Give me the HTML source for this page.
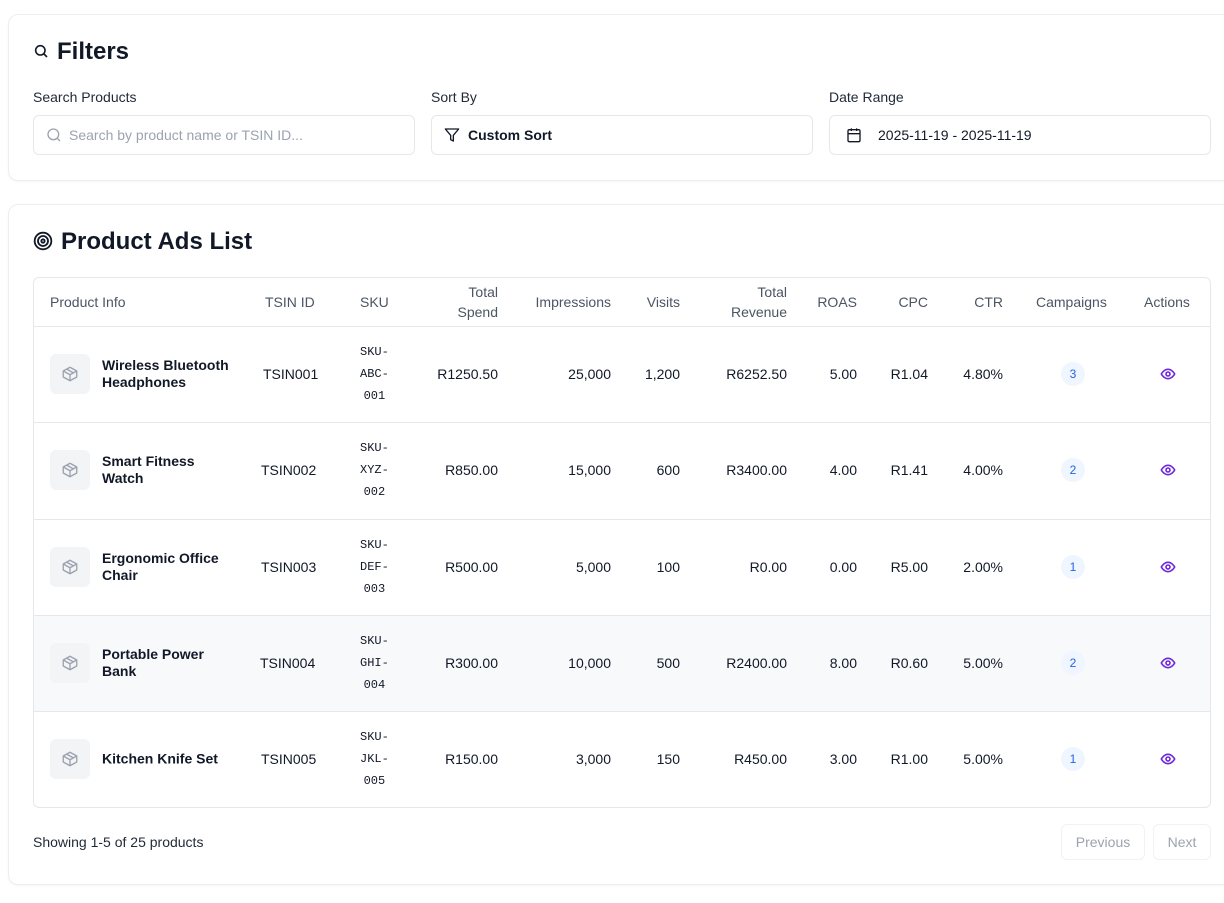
<!DOCTYPE html>
<html><head><meta charset="utf-8"><style>
*{box-sizing:border-box;margin:0;padding:0}
body{width:1224px;height:903px;background:#fff;font-family:"Liberation Sans",sans-serif;color:#111827;position:relative;overflow:hidden;font-size:14px}
.card{position:absolute;left:8px;width:1240px;border:1px solid #eceef1;border-radius:10px;background:#fff;box-shadow:0 1px 2px rgba(0,0,0,.04)}
.a{position:absolute;white-space:nowrap}
.lbl{font-size:14px;color:#1f2937}
.inp{position:absolute;top:115px;height:40px;width:382px;border:1px solid #e5e7eb;border-radius:6px}
.tbl{position:absolute;left:33px;top:277px;width:1178px;height:531px;border:1px solid #e5e7eb;border-radius:6px;overflow:hidden}
.row{position:absolute;left:0;width:1178px;height:96px;border-top:1px solid #e5e7eb}
.c{position:absolute;top:50%;transform:translateY(-50%);white-space:nowrap;font-size:14px;color:#111827;margin-top:-1px}
.h{position:absolute;top:50%;transform:translateY(-50%);white-space:nowrap;font-size:14px;color:#4b5563;text-align:right;line-height:20px}
.ic{position:absolute;left:16px;top:27px;width:40px;height:40px;background:#f3f4f6;border-radius:6px}
.sku{font-family:"Liberation Mono",monospace;font-size:12px;line-height:22px;text-align:center;color:#111827}
.bd{position:absolute;top:50%;transform:translate(-50%,-50%);width:24px;height:24px;border-radius:12px;background:#eff6ff;color:#2563eb;font-size:12px;text-align:center;line-height:24px;margin-top:-1px}
.name{line-height:17px;font-size:14px;font-weight:600;color:#111827}
.btn{position:absolute;top:824px;height:36px;border:1px solid #f1f2f4;border-radius:6px;color:#9ca3af;font-size:14px;line-height:34px;text-align:center}
</style></head><body>

<div class="card" style="top:14px;height:167px"></div>
<svg class="a" style="left:33px;top:43px" width="16" height="16" viewBox="0 0 24 24" fill="none" stroke="#111827" stroke-width="2.4"><circle cx="11" cy="11" r="7"/><path d="M21 21l-4.5-4.5"/></svg>
<div class="a" style="left:57px;top:38px;font-size:24px;font-weight:bold;color:#111827">Filters</div>
<div class="a lbl" style="left:33px;top:89px">Search Products</div>
<div class="a lbl" style="left:431px;top:89px">Sort By</div>
<div class="a lbl" style="left:829px;top:89px">Date Range</div>
<div class="inp" style="left:33px"></div>
<svg class="a" style="left:46px;top:127px" width="16" height="16" viewBox="0 0 24 24" fill="none" stroke="#9ca3af" stroke-width="2"><circle cx="11" cy="11" r="8"/><path d="M21 21l-4.3-4.3"/></svg>
<div class="a" style="left:69px;top:127px;color:#9ca3af;font-size:14px">Search by product name or TSIN ID...</div>
<div class="inp" style="left:431px"></div>
<svg class="a" style="left:444px;top:127px" width="16" height="16" viewBox="0 0 24 24" fill="none" stroke="#111827" stroke-width="2" stroke-linejoin="round"><path d="M22 3H2l8 9.46V19l4 2v-8.54L22 3z"/></svg>
<div class="a" style="left:468px;top:127px;font-weight:600;font-size:14px">Custom Sort</div>
<div class="inp" style="left:829px"></div>
<svg class="a" style="left:846px;top:127px" width="16" height="16" viewBox="0 0 24 24" fill="none" stroke="#111827" stroke-width="2"><rect x="3" y="4" width="18" height="18" rx="2"/><path d="M16 2v4M8 2v4M3 10h18"/></svg>
<div class="a" style="left:878px;top:127px;font-size:14px">2025-11-19 - 2025-11-19</div>

<div class="card" style="top:204px;height:681px"></div>
<svg class="a" style="left:33px;top:231px" width="20" height="20" viewBox="0 0 24 24" fill="none" stroke="#111827" stroke-width="2.2"><circle cx="12" cy="12" r="10"/><circle cx="12" cy="12" r="6"/><circle cx="12" cy="12" r="2"/></svg>
<div class="a" style="left:61px;top:228px;font-size:24px;font-weight:bold;color:#111827">Product Ads List</div>

<div class="tbl">
 <div style="position:absolute;left:0;top:0;width:1178px;height:48px">
  <div class="h" style="left:16px">Product Info</div>
  <div class="h" style="left:231px">TSIN ID</div>
  <div class="h" style="left:326px">SKU</div>
  <div class="h" style="right:714px">Total<br>Spend</div>
  <div class="h" style="right:601px">Impressions</div>
  <div class="h" style="right:532px">Visits</div>
  <div class="h" style="right:425px">Total<br>Revenue</div>
  <div class="h" style="right:355px">ROAS</div>
  <div class="h" style="right:284px">CPC</div>
  <div class="h" style="right:209px">CTR</div>
  <div class="h" style="left:1002px">Campaigns</div>
  <div class="h" style="left:1110px">Actions</div>
 </div>
 <div class="row" style="top:48px"><div class="ic"></div><svg class="a" style="left:27px;top:38px" width="18" height="18" viewBox="0 0 24 24" fill="none" stroke="#9ca3af" stroke-width="1.8" stroke-linejoin="round"><path d="M21 8l-9-5-9 5v8l9 5 9-5z"/><path d="M3 8l9 5 9-5M12 13v8M7.5 5.5l9 5"/></svg>
  <div class="c name" style="left:68px">Wireless Bluetooth<br>Headphones</div><div class="c" style="left:229px">TSIN001</div><div class="c sku" style="left:326px">SKU-<br>ABC-<br>001</div>
  <div class="c" style="right:714px">R1250.50</div><div class="c" style="right:601px">25,000</div><div class="c" style="right:532px">1,200</div><div class="c" style="right:425px">R6252.50</div><div class="c" style="right:355px">5.00</div><div class="c" style="right:284px">R1.04</div><div class="c" style="right:209px">4.80%</div><div class="bd" style="left:1039px">3</div>
  <svg class="a" style="left:1126px;top:39px" width="16" height="16" viewBox="0 0 24 24" fill="none" stroke="#6d28d9" stroke-width="2.4"><path d="M2 12s3.6-7 10-7 10 7 10 7-3.6 7-10 7S2 12 2 12z"/><circle cx="12" cy="12" r="3"/></svg></div>
 <div class="row" style="top:144px"><div class="ic"></div><svg class="a" style="left:27px;top:38px" width="18" height="18" viewBox="0 0 24 24" fill="none" stroke="#9ca3af" stroke-width="1.8" stroke-linejoin="round"><path d="M21 8l-9-5-9 5v8l9 5 9-5z"/><path d="M3 8l9 5 9-5M12 13v8M7.5 5.5l9 5"/></svg>
  <div class="c name" style="left:68px">Smart Fitness<br>Watch</div><div class="c" style="left:227px">TSIN002</div><div class="c sku" style="left:326px">SKU-<br>XYZ-<br>002</div>
  <div class="c" style="right:714px">R850.00</div><div class="c" style="right:601px">15,000</div><div class="c" style="right:532px">600</div><div class="c" style="right:425px">R3400.00</div><div class="c" style="right:355px">4.00</div><div class="c" style="right:284px">R1.41</div><div class="c" style="right:209px">4.00%</div><div class="bd" style="left:1039px">2</div>
  <svg class="a" style="left:1126px;top:39px" width="16" height="16" viewBox="0 0 24 24" fill="none" stroke="#6d28d9" stroke-width="2.4"><path d="M2 12s3.6-7 10-7 10 7 10 7-3.6 7-10 7S2 12 2 12z"/><circle cx="12" cy="12" r="3"/></svg></div>
 <div class="row" style="top:241px"><div class="ic"></div><svg class="a" style="left:27px;top:38px" width="18" height="18" viewBox="0 0 24 24" fill="none" stroke="#9ca3af" stroke-width="1.8" stroke-linejoin="round"><path d="M21 8l-9-5-9 5v8l9 5 9-5z"/><path d="M3 8l9 5 9-5M12 13v8M7.5 5.5l9 5"/></svg>
  <div class="c name" style="left:68px">Ergonomic Office<br>Chair</div><div class="c" style="left:227px">TSIN003</div><div class="c sku" style="left:326px">SKU-<br>DEF-<br>003</div>
  <div class="c" style="right:714px">R500.00</div><div class="c" style="right:601px">5,000</div><div class="c" style="right:532px">100</div><div class="c" style="right:425px">R0.00</div><div class="c" style="right:355px">0.00</div><div class="c" style="right:284px">R5.00</div><div class="c" style="right:209px">2.00%</div><div class="bd" style="left:1039px">1</div>
  <svg class="a" style="left:1126px;top:39px" width="16" height="16" viewBox="0 0 24 24" fill="none" stroke="#6d28d9" stroke-width="2.4"><path d="M2 12s3.6-7 10-7 10 7 10 7-3.6 7-10 7S2 12 2 12z"/><circle cx="12" cy="12" r="3"/></svg></div>
 <div class="row" style="top:337px;background:#f8f9fb"><div class="ic"></div><svg class="a" style="left:27px;top:38px" width="18" height="18" viewBox="0 0 24 24" fill="none" stroke="#9ca3af" stroke-width="1.8" stroke-linejoin="round"><path d="M21 8l-9-5-9 5v8l9 5 9-5z"/><path d="M3 8l9 5 9-5M12 13v8M7.5 5.5l9 5"/></svg>
  <div class="c name" style="left:68px">Portable Power<br>Bank</div><div class="c" style="left:226px">TSIN004</div><div class="c sku" style="left:326px">SKU-<br>GHI-<br>004</div>
  <div class="c" style="right:714px">R300.00</div><div class="c" style="right:601px">10,000</div><div class="c" style="right:532px">500</div><div class="c" style="right:425px">R2400.00</div><div class="c" style="right:355px">8.00</div><div class="c" style="right:284px">R0.60</div><div class="c" style="right:209px">5.00%</div><div class="bd" style="left:1039px">2</div>
  <svg class="a" style="left:1126px;top:39px" width="16" height="16" viewBox="0 0 24 24" fill="none" stroke="#6d28d9" stroke-width="2.4"><path d="M2 12s3.6-7 10-7 10 7 10 7-3.6 7-10 7S2 12 2 12z"/><circle cx="12" cy="12" r="3"/></svg></div>
 <div class="row" style="top:433px"><div class="ic"></div><svg class="a" style="left:27px;top:38px" width="18" height="18" viewBox="0 0 24 24" fill="none" stroke="#9ca3af" stroke-width="1.8" stroke-linejoin="round"><path d="M21 8l-9-5-9 5v8l9 5 9-5z"/><path d="M3 8l9 5 9-5M12 13v8M7.5 5.5l9 5"/></svg>
  <div class="c name" style="left:68px">Kitchen Knife Set</div><div class="c" style="left:227px">TSIN005</div><div class="c sku" style="left:326px">SKU-<br>JKL-<br>005</div>
  <div class="c" style="right:714px">R150.00</div><div class="c" style="right:601px">3,000</div><div class="c" style="right:532px">150</div><div class="c" style="right:425px">R450.00</div><div class="c" style="right:355px">3.00</div><div class="c" style="right:284px">R1.00</div><div class="c" style="right:209px">5.00%</div><div class="bd" style="left:1039px">1</div>
  <svg class="a" style="left:1126px;top:39px" width="16" height="16" viewBox="0 0 24 24" fill="none" stroke="#6d28d9" stroke-width="2.4"><path d="M2 12s3.6-7 10-7 10 7 10 7-3.6 7-10 7S2 12 2 12z"/><circle cx="12" cy="12" r="3"/></svg></div>
</div>

<div class="a" style="left:33px;top:834px;font-size:14px;color:#1f2937">Showing 1-5 of 25 products</div>
<div class="btn" style="left:1061px;width:84px">Previous</div>
<div class="btn" style="left:1153px;width:58px">Next</div>
</body></html>
